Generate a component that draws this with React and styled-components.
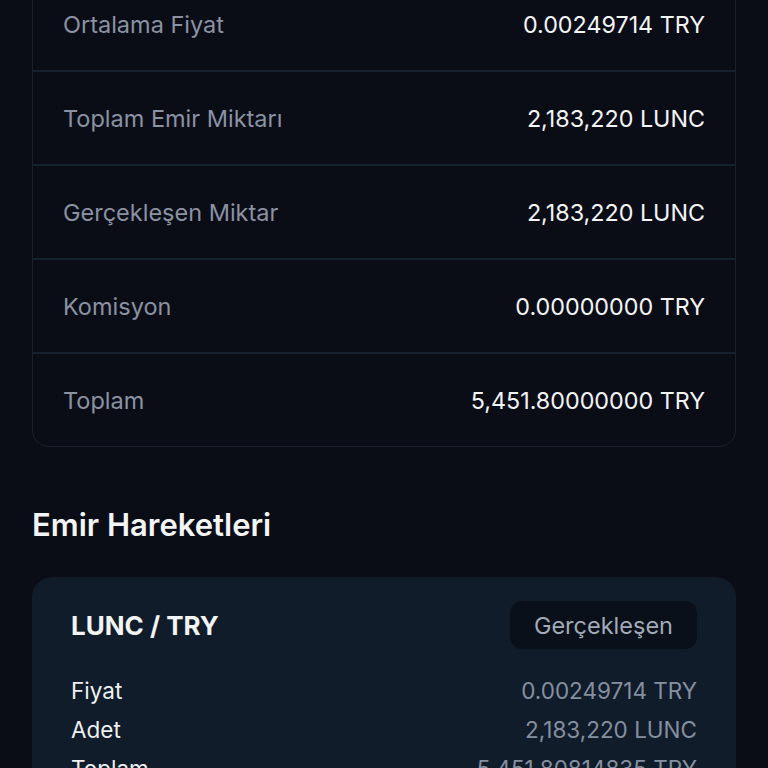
import React from 'react'
import styled, { createGlobalStyle } from 'styled-components'

const GlobalStyle = createGlobalStyle`
    html, body {
        margin: 0;
        padding: 0;
        background: #0a0d16;
        font-family: Inter, "Noto Sans", sans-serif;
        -webkit-font-smoothing: antialiased;
    }
`

const Page = styled.div`
    min-height: 768px;
    padding: 0 32px 40px;
    background: #0a0d16;
    overflow: hidden;
    box-sizing: border-box;
`

const DetailCard = styled.div`
    margin-top: -23px;
    border: 1px solid #18212e;
    border-radius: 16px;
    background: #0a0d16;
`

const DetailRow = styled.div`
    display: flex;
    justify-content: space-between;
    align-items: center;
    height: 92px;
    padding: 0 30px;
    border-top: ${p => (p.first ? 'none' : '2px solid #172231')};
`

const Label = styled.span`
    font-size: 23.5px;
    color: #8a92a3;
`

const Value = styled.span`
    font-size: 23.3px;
    color: #f3f4f6;
    font-weight: 400;
`

const SectionTitle = styled.h2`
    margin: 61px 0 35px;
    font-size: 31px;
    line-height: 34px;
    font-weight: 600;
    color: #f3f4f6;
`

const TradeCard = styled.div`
    background: #111c2a;
    border-radius: 20px;
    padding: 24px 39px 20px 39px;
`

const TradeHeader = styled.div`
    display: flex;
    justify-content: space-between;
    align-items: center;
    margin-bottom: 22px;
`

const Pair = styled.span`
    font-size: 26px;
    font-weight: 700;
    color: #f3f4f6;
`

const Badge = styled.span`
    display: inline-flex;
    align-items: center;
    height: 48px;
    padding: 0 24px;
    border-radius: 12px;
    background: #0a1019;
    color: #a3aab8;
    font-size: 23.5px;
`

const TradeRow = styled.div`
    display: flex;
    justify-content: space-between;
    align-items: center;
    height: 39px;
`

const TradeLabel = styled.span`
    font-size: 22.5px;
    color: #eef0f3;
`

const TradeValue = styled.span`
    font-size: 22.5px;
    color: #858fa0;
`

const details = [
    ['Ortalama Fiyat', '0.00249714 TRY'],
    ['Toplam Emir Miktarı', '2,183,220 LUNC'],
    ['Gerçekleşen Miktar', '2,183,220 LUNC'],
    ['Komisyon', '0.00000000 TRY'],
    ['Toplam', '5,451.80000000 TRY'],
]

const trades = [
    ['Fiyat', '0.00249714 TRY'],
    ['Adet', '2,183,220 LUNC'],
    ['Toplam', '5,451.80814835 TRY'],
]

const App = () => {
    return (
        <>
            <GlobalStyle />
            <Page>
                <DetailCard>
                    {details.map(([label, value], i) => (
                        <DetailRow key={label} first={i === 0}>
                            <Label>{label}</Label>
                            <Value>{value}</Value>
                        </DetailRow>
                    ))}
                </DetailCard>

                <SectionTitle>Emir Hareketleri</SectionTitle>

                <TradeCard>
                    <TradeHeader>
                        <Pair>LUNC / TRY</Pair>
                        <Badge>Gerçekleşen</Badge>
                    </TradeHeader>
                    {trades.map(([label, value]) => (
                        <TradeRow key={label}>
                            <TradeLabel>{label}</TradeLabel>
                            <TradeValue>{value}</TradeValue>
                        </TradeRow>
                    ))}
                </TradeCard>
            </Page>
        </>
    )
}

export default App
